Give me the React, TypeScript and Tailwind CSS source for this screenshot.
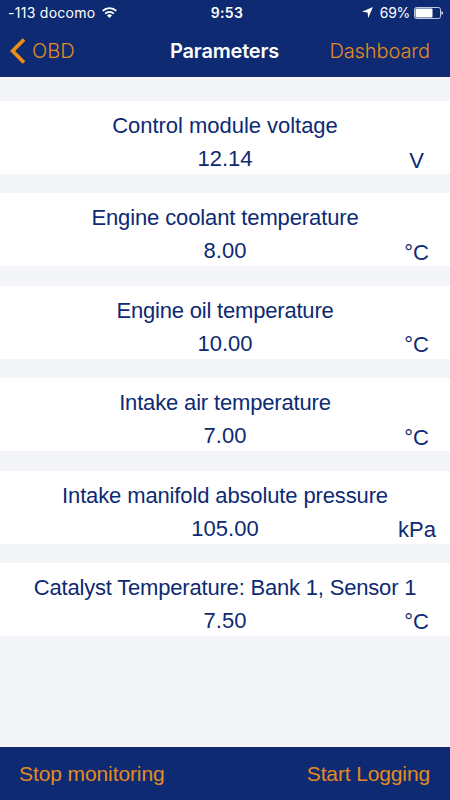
const rows = [
  { name: 'Control module voltage', value: '12.14', unit: 'V', tracking: 'tracking-[-0.03px]', gap: 'pr-[26px]' },
  { name: 'Engine coolant temperature', value: '8.00', unit: '°C', tracking: 'tracking-[-0.12px]', gap: 'pr-[21px]' },
  { name: 'Engine oil temperature', value: '10.00', unit: '°C', tracking: 'tracking-[-0.19px]', gap: 'pr-[21px]' },
  { name: 'Intake air temperature', value: '7.00', unit: '°C', tracking: 'tracking-[-0.16px]', gap: 'pr-[21px]' },
  { name: 'Intake manifold absolute pressure', value: '105.00', unit: 'kPa', tracking: 'tracking-[-0.13px]', gap: 'pr-[14px]' },
  { name: 'Catalyst Temperature: Bank 1, Sensor 1', value: '7.50', unit: '°C', tracking: 'tracking-[-0.19px]', gap: 'pr-[21px]' },
];

function StatusBar() {
  return (
    <div className="grid h-[25px] grid-cols-[1fr_auto_1fr] items-center pl-2 pr-[6px] text-[14px]">
      <div className="flex items-center gap-[6px]">
        <span className="tracking-[0.28px]">-113 docomo</span>
        <svg width="15" height="11" viewBox="0 0 15 11" fill="none" stroke="white" strokeWidth="1.9">
          <path d="M.7 3.9a9.7 9.7 0 0 1 13.6 0M3.2 6.6a6.1 6.1 0 0 1 8.6 0" />
          <path d="M7.5 11 5 8.5a3.6 3.6 0 0 1 5 0Z" fill="white" stroke="none" />
        </svg>
      </div>
      <span className="pl-[2px] font-semibold tracking-[0.4px]">9:53</span>
      <div className="flex items-center justify-end gap-1">
        <svg className="mr-[3px]" width="11" height="11" viewBox="0 0 11 11" fill="white"><path d="M11 0 6.2 11 5.6 5.4 0 4.8Z" /></svg>
        <span className="tracking-[-0.3px]">69%</span>
        <svg width="30" height="12" viewBox="0 0 30 12">
          <rect x=".5" y=".5" width="26" height="11" rx="2" fill="none" stroke="white" strokeOpacity=".75" />
          <rect x="1.5" y="1.5" width="17" height="9" rx="1" fill="white" />
          <path d="M27.5 4q3 2 0 4Z" fill="white" />
        </svg>
      </div>
    </div>
  );
}

export default function App() {
  return (
    <div className="flex h-[800px] w-[450px] flex-col overflow-hidden bg-[#f4f5f9] font-['Liberation_Sans',Arial,sans-serif] text-[22px] text-[#0d2a72]">
      <header className="h-[77px] bg-[#0d2a72] font-['Inter',sans-serif] text-white">
        <StatusBar />
        <div className="grid h-[52px] grid-cols-[1fr_auto_1fr] items-center pl-2.5 pr-5 text-[20px] text-[#e48a20]">
          <div className="flex items-center gap-[6px]">
            <svg width="16" height="26" viewBox="0 0 16 26" fill="none" stroke="#ee8c14" strokeWidth="3.8"><path d="M14 1.5 2.6 13 14 24.5" /></svg>
            <span className="font-light">OBD</span>
          </div>
          <span className="pl-[9px] font-semibold tracking-[-0.2px] text-white">Parameters</span>
          <span className="text-right font-light tracking-[-0.1px]">Dashboard</span>
        </div>
      </header>
      <main className="flex flex-1 flex-col gap-[19.4px] pt-6">
        {rows.map((r) => (
          <section key={r.name} className="grid h-[73px] grid-rows-[48px_25px] bg-white">
            <div className={`text-center leading-[50px] ${r.tracking}`}>{r.name}</div>
            <div className="grid grid-cols-[1fr_auto_1fr] leading-[19px]">
              <span className="col-start-2">{r.value}</span>
              <span className={`pt-[1.5px] text-right ${r.gap}`}>{r.unit}</span>
            </div>
          </section>
        ))}
      </main>
      <footer className="flex h-[53px] items-center justify-between bg-[#0d2a72] pl-[19px] pr-5 text-[21px] text-[#e48a20]">
        <span className="tracking-[-0.1px]">Stop monitoring</span>
        <span className="tracking-[-0.13px]">Start Logging</span>
      </footer>
    </div>
  );
}
